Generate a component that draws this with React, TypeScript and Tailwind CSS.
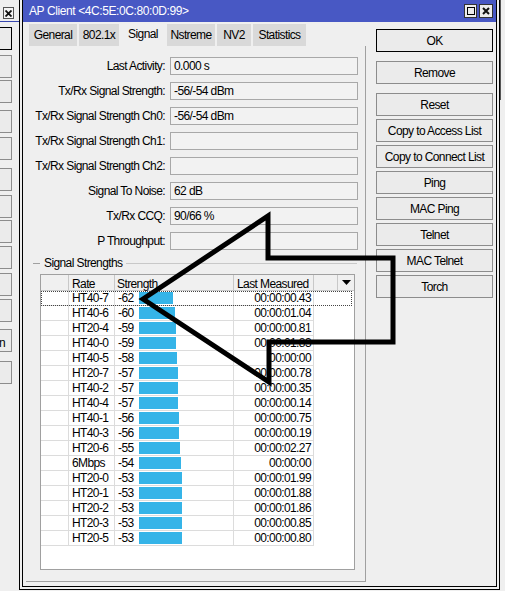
const rows: [string, number, string][] = [
  ["HT40-7", -62, "00:00:00.43"],
  ["HT40-6", -60, "00:00:01.04"],
  ["HT20-4", -59, "00:00:00.81"],
  ["HT40-0", -59, "00:00:01.83"],
  ["HT40-5", -58, "00:00:00"],
  ["HT20-7", -57, "00:00:00.78"],
  ["HT40-2", -57, "00:00:00.35"],
  ["HT40-4", -57, "00:00:00.14"],
  ["HT40-1", -56, "00:00:00.75"],
  ["HT40-3", -56, "00:00:00.19"],
  ["HT20-6", -55, "00:00:02.27"],
  ["6Mbps", -54, "00:00:00"],
  ["HT20-0", -53, "00:00:01.99"],
  ["HT20-1", -53, "00:00:01.88"],
  ["HT20-2", -53, "00:00:01.86"],
  ["HT20-3", -53, "00:00:00.85"],
  ["HT20-5", -53, "00:00:00.80"],
];

const fields: [string, string][] = [
  ["Last Activity:", "0.000 s"],
  ["Tx/Rx Signal Strength:", "-56/-54 dBm"],
  ["Tx/Rx Signal Strength Ch0:", "-56/-54 dBm"],
  ["Tx/Rx Signal Strength Ch1:", ""],
  ["Tx/Rx Signal Strength Ch2:", ""],
  ["Signal To Noise:", "62 dB"],
  ["Tx/Rx CCQ:", "90/66 %"],
  ["P Throughput:", ""],
];

const tabs: [string, number][] = [
  ["General", 48],
  ["802.1x", 40],
  ["Signal", 44],
  ["Nstreme", 48],
  ["NV2", 34],
  ["Statistics", 53],
];

const sideButtons = ["Copy to Access List", "Copy to Connect List", "Ping", "MAC Ping", "Telnet", "MAC Telnet", "Torch"];

// behind window: button tops on the left strip
const bgButtons = [27, 55, 80, 110, 137, 168, 195, 220, 246, 273, 299, 329, 361];

function Btn({ label, dark }: { label: string; dark?: boolean }) {
  return (
    <div
      className={`flex h-[23px] w-[117px] items-center justify-center border bg-[#ebebeb] ${
        dark ? "border-black" : "border-[#8c8c8c]"
      }`}
    >
      {label}
    </div>
  );
}

export default function App() {
  return (
    <div
      className="relative flex h-[591px] w-[505px] overflow-hidden bg-[#efefef] text-[12px] tracking-[-0.6px] text-black"
      style={{ fontFamily: '"Liberation Sans", Arial, sans-serif' }}
    >
      {/* window behind, only its right edge shows */}
      <div className="relative w-[19px] shrink-0">
        <div className="absolute left-[3px] top-[7px] flex h-[12px] w-[11px] items-center justify-center border border-[#555] bg-[#f4f4f4]">
          <svg width="7" height="7" viewBox="0 0 7 7">
            <path d="M0.5 0.5 L6.5 6.5 M6.5 0.5 L0.5 6.5" stroke="#111" strokeWidth="1.8" />
          </svg>
        </div>
        <div className="absolute left-0 top-[21px] h-px w-[19px] bg-[#3848b0]" />
        {bgButtons.map((t, i) => (
          <div
            key={t}
            className={`absolute left-[-21px] h-[23px] w-[33px] border ${
              i === 0 ? "border-black" : "border-[#8c8c8c]"
            } bg-[#ebebeb]`}
            style={{ top: t }}
          >
            {i === 11 && <span className="absolute right-[6px] top-[4px]">n</span>}
          </div>
        ))}
      </div>

      {/* AP Client window */}
      <div className="h-[590px] w-[481px] shrink-0 border-x border-b border-black px-[2px] pb-[2px]">
        <div className="flex h-full flex-col border-x border-b border-black">
          <div className="flex h-[22px] shrink-0 items-center bg-[#4858c4] pl-[6px] pr-[3px] text-white">
            <span className="flex-1 tracking-[-0.4px]">AP Client &lt;4C:5E:0C:80:0D:99&gt;</span>
            <div className="flex gap-[2px]">
              <div className="flex h-[14px] w-[13px] items-center justify-center border border-[#333] bg-[#ececec]">
                <div className="h-[8px] w-[8px] border border-black" />
              </div>
              <div className="flex h-[14px] w-[14px] items-center justify-center border border-[#333] bg-[#ececec]">
                <svg width="8" height="8" viewBox="0 0 8 8">
                  <path d="M1 1 L7 7 M7 1 L1 7" stroke="#111" strokeWidth="2" />
                </svg>
              </div>
            </div>
          </div>

          <div className="flex flex-1">
            <div className="flex w-[343px] flex-col">
              <div className="mt-[2px] flex h-[22px] gap-[2px] pl-[6px]">
                {tabs.map(([name, w]) => (
                  <div
                    key={name}
                    className={`flex items-center justify-center ${name === "Signal" ? "bg-[#efefef] pb-[3px]" : "bg-[#d9d9d9]"}`}
                    style={{ width: w }}
                  >
                    {name}
                  </div>
                ))}
              </div>

              <div className="ml-[3px] flex w-[340px] flex-1 flex-col border-b border-r border-[#a0a0a0] pt-[11px]">
                {fields.map(([label, value]) => (
                  <div key={label} className="mb-[7px] flex h-[18px] items-center">
                    <div className="w-[139px] text-right">{label}</div>
                    <div className="ml-[5px] flex h-[18px] w-[188px] items-center border border-[#a8a8a8] bg-[#f2f2f2] pl-[3px]">
                      {value}
                    </div>
                  </div>
                ))}

                <div className="mt-[-1px] flex h-[14px] items-center">
                  <div className="ml-[7px] h-px w-[7px] bg-[#a0a0a0]" />
                  <span className="px-[4px]">Signal Strengths</span>
                  <div className="mr-[8px] h-px flex-1 bg-[#c8c8c8]" />
                </div>

                <div className="ml-[14px] mt-[4px] flex h-[296px] w-[315px] flex-col border border-[#a0a0a0] bg-white">
                  <div className="flex h-[16px] shrink-0 border-b border-[#c8c8c8] bg-[#f0f0f0]">
                    <div className="w-[28px] border-r border-[#c8c8c8]" />
                    <div className="w-[46px] border-r border-[#c8c8c8] pl-[3px]">Rate</div>
                    <div className="w-[119px] border-r border-[#c8c8c8] pl-[2px]">Strength</div>
                    <div className="w-[80px] border-r border-[#c8c8c8] pl-[3px]">Last Measured</div>
                    <div className="w-[24px] border-r border-[#c8c8c8]" />
                    <div className="flex w-[16px] items-center justify-center">
                      <svg width="9" height="5" viewBox="0 0 9 5">
                        <path d="M0 0 H9 L4.5 5 Z" fill="#000" />
                      </svg>
                    </div>
                  </div>
                  {rows.map(([rate, sig, last], i) => (
                    <div
                      key={rate}
                      className={`flex h-[15px] shrink-0 ${
                        i === 0 ? "mr-[2px] outline-1 -outline-offset-1 outline-[#444] outline-dotted" : ""
                      }`}
                    >
                      <div className="w-[28px] border-b border-r border-[#dcdcdc]" />
                      <div className="w-[46px] border-b border-r border-[#dcdcdc] pl-[3px] leading-[14px]">{rate}</div>
                      <div className="flex w-[119px] items-center border-b border-r border-[#dcdcdc] pl-[3px]">
                        <span className="w-[21px] leading-[14px]">{sig}</span>
                        <div className="h-[12px] bg-[#35b4e8]" style={{ width: 96 + sig }} />
                      </div>
                      <div className="w-[80px] border-b border-r border-[#dcdcdc] pr-[2px] text-right leading-[14px]">
                        {last}
                      </div>
                    </div>
                  ))}
                </div>
              </div>
              <div className="h-[4px]" />
            </div>

            <div className="ml-[10px] mt-[7px] flex flex-col">
              <div className="mb-[9px]">
                <Btn label="OK" dark />
              </div>
              <div className="mb-[9px]">
                <Btn label="Remove" />
              </div>
              <div className="flex flex-col gap-[3px]">
                <Btn label="Reset" />
                {sideButtons.map((b) => (
                  <Btn key={b} label={b} />
                ))}
              </div>
            </div>
          </div>
        </div>
      </div>

      <div className="flex w-[5px] shrink-0 flex-col">
        <div className="h-[100px] border-l border-[#555]" />
      </div>

      {/* hand-drawn arrow pointing at the first row */}
      <svg className="pointer-events-none absolute left-0 top-0" width="505" height="591" viewBox="0 0 505 591">
        <polygon
          points="143,299 268,216 268,258 393,258 393,342 269,342 269,382"
          fill="none"
          stroke="#000"
          strokeWidth="5"
          strokeLinejoin="miter"
        />
      </svg>
    </div>
  );
}
